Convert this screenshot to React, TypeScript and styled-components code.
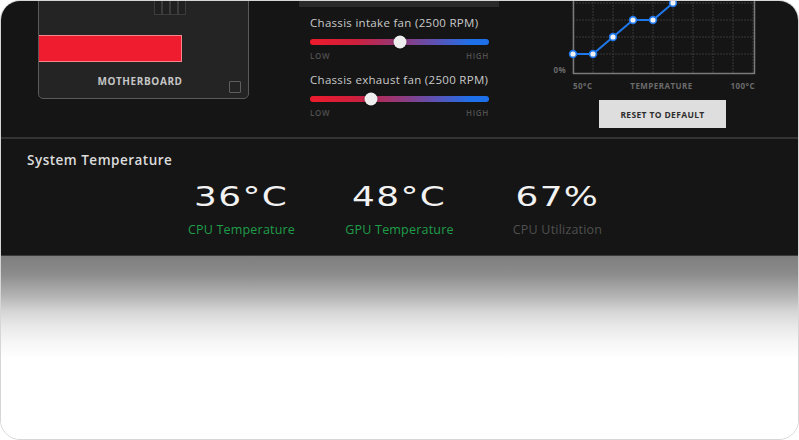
import styled, {createGlobalStyle} from 'styled-components'

const GlobalStyle = createGlobalStyle`
    html, body {
        margin: 0;
        padding: 0;
        background: #ffffff;
    }
    * {
        box-sizing: border-box;
    }
`

const fans = [
    {name: 'Chassis intake fan (2500 RPM)', value: 50},
    {name: 'Chassis exhaust fan (2500 RPM)', value: 34},
]

const stats = [
    {value: '36°C', label: 'CPU Temperature', tone: 'green'},
    {value: '48°C', label: 'GPU Temperature', tone: 'green'},
    {value: '67%', label: 'CPU Utilization', tone: 'grey'},
]

// curve points in chart coordinates (svg offset: x 545, y -40)
const curve = [
    [27, 94],
    [47, 94],
    [67, 77],
    [87, 60],
    [107, 60],
    [127, 43],
]

const FanCurve = () => {
    const cols = Array.from({length: 10}, (_, i) => 27 + i * 20)
    const rows = [9, 26, 43, 60, 77, 94]
    return (
        <svg width="215" height="116" viewBox="0 0 215 116">
            {cols.map((x) => (
                <line key={'c' + x} x1={x} y1={0} x2={x} y2={113} stroke="#393939" strokeWidth="1" strokeDasharray="2 1"/>
            ))}
            {rows.map((y) => (
                <line key={'r' + y} x1={27} y1={y} x2={208} y2={y} stroke="#393939" strokeWidth="1" strokeDasharray="2 1"/>
            ))}
            <polyline points="27.5,0 27.5,113.5 208.5,113.5 208.5,0" fill="none" stroke="#7a7a7a" strokeWidth="1.5"/>
            <text x="20" y="113" textAnchor="end" fill="#6a6a6a" fontSize="8" fontWeight="700" letterSpacing="0.3"
                  fontFamily="'Open Sans', sans-serif">0%</text>
            <polyline points={curve.map((p) => p.join(',')).join(' ')} fill="none" stroke="#1f78ea" strokeWidth="2"/>
            {curve.map(([x, y]) => (
                <circle key={x} cx={x} cy={y} r="3.4" fill="#f2f2f2" stroke="#1f78ea" strokeWidth="1.6"/>
            ))}
        </svg>
    )
}

export default () => {
    return (
        <>
            <GlobalStyle/>
            <Frame>
                <Dark>
                    <TopRow>
                        <Motherboard>
                            <Slots>
                                <Slot/><Slot/><Slot/><Slot/>
                            </Slots>
                            <RedBar/>
                            <BoardFooter>
                                <span/>
                                <BoardLabel>MOTHERBOARD</BoardLabel>
                                <BoardSquare/>
                            </BoardFooter>
                        </Motherboard>

                        <Fans>
                            <FanHeader/>
                            {fans.map((fan) => (
                                <Fan key={fan.name}>
                                    <FanName>{fan.name}</FanName>
                                    <Track>
                                        <Thumb style={{left: `${fan.value}%`}}/>
                                    </Track>
                                    <Range>
                                        <span>LOW</span>
                                        <span>HIGH</span>
                                    </Range>
                                </Fan>
                            ))}
                        </Fans>

                        <Chart>
                            <FanCurve/>
                            <AxisLabels>
                                <span>50°C</span>
                                <span>TEMPERATURE</span>
                                <span>100°C</span>
                            </AxisLabels>
                            <ResetButton>RESET TO DEFAULT</ResetButton>
                        </Chart>
                    </TopRow>

                    <Divider/>

                    <SystemSection>
                        <SectionTitle>System Temperature</SectionTitle>
                        <StatRow>
                            {stats.map((s) => (
                                <Stat key={s.label}>
                                    <StatValue>{s.value}</StatValue>
                                    <StatLabel $tone={s.tone}>{s.label}</StatLabel>
                                </Stat>
                            ))}
                        </StatRow>
                    </SystemSection>
                </Dark>
                <Fade/>
            </Frame>
        </>
    )
}

const Frame = styled.div`
    width: 799px;
    height: 440px;
    display: flex;
    flex-direction: column;
    border: 1px solid #d6d6d6;
    border-radius: 20px;
    overflow: hidden;
    background: #ffffff;
    font-family: 'Open Sans', 'Liberation Sans', sans-serif;
`

const Dark = styled.div`
    height: 255px;
    flex-shrink: 0;
    background: #151515;
    border-bottom: 1px solid #3a3a3a;
`

const TopRow = styled.div`
    display: flex;
    align-items: flex-start;
    height: 177px;
    margin-top: -41px;
    padding-left: 37px;
`

const Motherboard = styled.div`
    width: 211px;
    margin-top: 9px;
    display: flex;
    flex-direction: column;
    background: #242424;
    border: 1px solid #5a5a5a;
    border-radius: 5px;
`

const Slots = styled.div`
    display: flex;
    margin: 20px 0 0 115px;
`

const Slot = styled.div`
    width: 8px;
    height: 25px;
    border: 1px solid #3c3c3c;
    background: #202020;
`

const RedBar = styled.div`
    width: 143px;
    height: 27px;
    margin-top: 20px;
    background: #ee1c2e;
    border: 1px solid rgba(255, 220, 220, 0.55);
    border-left: none;
`

const BoardFooter = styled.div`
    display: grid;
    grid-template-columns: 1fr auto 1fr;
    height: 23px;
    margin-top: 13px;
    padding: 0 7px 5px 0;
`

const BoardLabel = styled.div`
    align-self: start;
    font-size: 10px;
    line-height: 12px;
    font-weight: 700;
    letter-spacing: 0.6px;
    color: #c6c6c6;
`

const BoardSquare = styled.div`
    justify-self: end;
    align-self: end;
    width: 12px;
    height: 12px;
    border: 1.5px solid #5e5e5e;
    border-radius: 1px;
`

const Fans = styled.div`
    width: 200px;
    margin-left: 50px;
    display: flex;
    flex-direction: column;
`

const FanHeader = styled.div`
    height: 47px;
    background: #2a2a2a;
    margin-bottom: 9px;
`

const Fan = styled.div`
    display: flex;
    flex-direction: column;
    padding: 0 10px 0 11px;

    & + & {
        margin-top: 13px;
    }
`

const FanName = styled.div`
    font-size: 11.5px;
    line-height: 14px;
    letter-spacing: 0.3px;
    color: #c9c9c9;
    white-space: nowrap;
`

const Track = styled.div`
    position: relative;
    height: 6px;
    margin: 9px 0 3px;
    border-radius: 3px;
    background: linear-gradient(90deg, #ee1b2c 0%, #cf1f3c 25%, #93397a 50%, #5d52b4 70%, #1e70ea 90%, #1e70ea 100%);
`

const Thumb = styled.div`
    position: absolute;
    top: 50%;
    width: 13px;
    height: 13px;
    border-radius: 50%;
    background: #eeeeee;
    transform: translate(-50%, -50%);
    box-shadow: 0 0 2px rgba(0, 0, 0, 0.5);
`

const Range = styled.div`
    display: flex;
    justify-content: space-between;
    margin-top: 3px;
    font-size: 8px;
    line-height: 9px;
    font-weight: 600;
    letter-spacing: 0.7px;
    color: #505050;
`

const Chart = styled.div`
    width: 215px;
    margin-left: 47px;
    display: flex;
    flex-direction: column;

    svg {
        display: block;
    }
`

const AxisLabels = styled.div`
    display: flex;
    justify-content: space-between;
    margin: 5px 6px 0 27px;
    font-size: 8px;
    line-height: 10px;
    font-weight: 700;
    letter-spacing: 0.45px;
    color: #6a6a6a;
`

const ResetButton = styled.div`
    align-self: center;
    width: 127px;
    height: 28px;
    margin: 9px 0 0 18px;
    display: flex;
    align-items: center;
    justify-content: center;
    background: #dedede;
    color: #2e2e2e;
    font-size: 8.5px;
    font-weight: 700;
    letter-spacing: 0.35px;
`

const Divider = styled.div`
    height: 2px;
    background: #343434;
`

const SystemSection = styled.div`
    padding: 13px 0 0 26px;
`

const SectionTitle = styled.div`
    font-size: 13.5px;
    line-height: 16px;
    font-weight: 600;
    letter-spacing: 0.5px;
    color: #dcdcdc;
`

const StatRow = styled.div`
    display: flex;
    justify-content: center;
    margin: 14px 26px 0 0;
`

const Stat = styled.div`
    width: 158px;
    display: flex;
    flex-direction: column;
    align-items: center;
`

const StatValue = styled.div`
    display: inline-block;
    font-family: 'DejaVu Sans', sans-serif;
    font-size: 26px;
    line-height: 30px;
    letter-spacing: 1px;
    color: #f2f2f2;
    transform: scaleX(1.38);
`

const StatLabel = styled.div<{ $tone: string }>`
    margin-top: 10px;
    font-size: 12.5px;
    line-height: 15px;
    letter-spacing: 0.2px;
    color: ${(p) => (p.$tone === 'green' ? '#1f9e4a' : '#4f4f4f')};
`

const Fade = styled.div`
    flex: 1;
    background: linear-gradient(180deg, #7e7e7e 0%, #8c8c8c 10%, #b4b4b4 22%, #d4d4d4 30%, #e8e8e8 38%, #f6f6f6 47%, #ffffff 56%);
`
